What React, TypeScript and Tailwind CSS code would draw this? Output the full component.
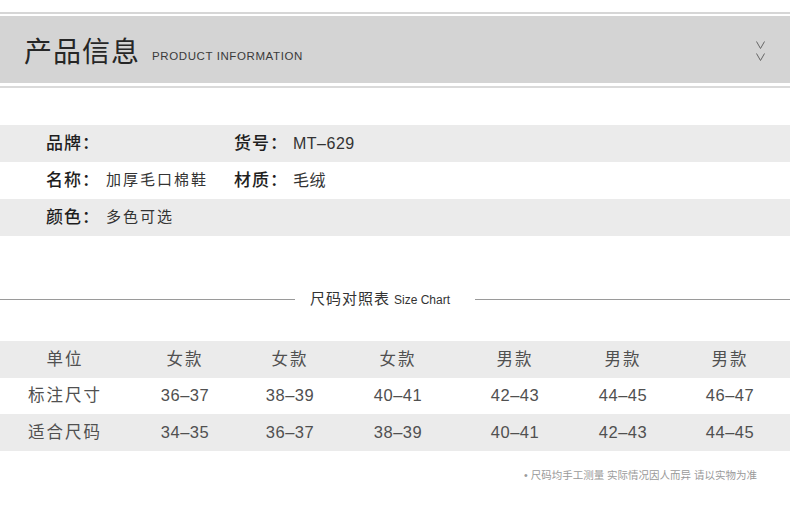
const font = { fontFamily: '"Liberation Sans", "Noto Sans CJK SC", sans-serif' };

const info = [
  { k1: '品牌', v1: '', k2: '货号', v2: 'MT–629', gray: true },
  { k1: '名称', v1: '加厚毛口棉鞋', k2: '材质', v2: '毛绒', gray: false },
  { k1: '颜色', v1: '多色可选', k2: '', v2: '', gray: true },
];

const widths = ['w-[130px]', 'w-[110px]', 'w-[100px]', 'w-[116px]', 'w-[118px]', 'w-[98px]', 'w-[116px]'];

const rows = [
  ['单位', '女款', '女款', '女款', '男款', '男款', '男款'],
  ['标注尺寸', '36–37', '38–39', '40–41', '42–43', '44–45', '46–47'],
  ['适合尺码', '34–35', '36–37', '38–39', '40–41', '42–43', '44–45'],
];

export default function App() {
  return (
    <div className="w-[790px] h-[528px] bg-white overflow-hidden text-[#333]" style={font}>
      {/* 标题栏 */}
      <div className="pt-[12px]">
        <div className="h-[2px] bg-[#d6d6d6]" />
        <div className="mt-[2px] h-[67px] bg-[#d4d4d4] flex items-center pl-[24px] pr-[24px]">
          <span className="mt-[6px] text-[28px] leading-none tracking-[1px] text-[#262626]">产品信息</span>
          <span className="ml-[12px] mt-[14px] text-[11.5px] tracking-[0.6px] text-[#3a3a3a]">PRODUCT INFORMATION</span>
          <div className="ml-auto flex flex-col items-center mr-[1px] mt-[2px]">
            <svg width="9" height="8" viewBox="0 0 9 8" fill="none" stroke="#666" strokeWidth="1">
              <path d="M0.5 0.5 L4.5 7.5 L8.5 0.5" />
            </svg>
            <svg className="mt-[4px]" width="9" height="8" viewBox="0 0 9 8" fill="none" stroke="#666" strokeWidth="1">
              <path d="M0.5 0.5 L4.5 7.5 L8.5 0.5" />
            </svg>
          </div>
        </div>
        <div className="mt-[3px] h-[2px] bg-[#dadada]" />
      </div>

      {/* 产品信息 */}
      <div className="mt-[37px]">
        {info.map((r, i) => (
          <div key={i} className={`h-[37px] flex items-center whitespace-nowrap ${r.gray ? 'bg-[#ebebeb]' : 'bg-white'}`}>
            <div className="w-[234px] pl-[46px] flex items-center">
              <span className="text-[17px] font-medium text-[#1e1e1e] tracking-[1px]">{r.k1}：</span>
              <span className="ml-[6px] text-[15px] tracking-[2px] text-[#333]">{r.v1}</span>
            </div>
            {r.k2 && (
              <div className="flex items-center">
                <span className="text-[17px] font-medium text-[#1e1e1e] tracking-[1px]">{r.k2}：</span>
                <span className="ml-[5px] text-[16px] tracking-[0.5px] text-[#333]">{r.v2}</span>
              </div>
            )}
          </div>
        ))}
      </div>

      {/* 尺码对照表 */}
      <div className="mt-[53px] flex items-center h-[20px]">
        <div className="w-[295px] h-px bg-[#9a9a9a]" />
        <div className="ml-[15px] flex items-baseline">
          <span className="text-[15px] tracking-[1px] text-[#333]">尺码对照表</span>
          <span className="ml-[4px] text-[12px] text-[#333]">Size Chart</span>
        </div>
        <div className="ml-auto w-[315px] h-px bg-[#9a9a9a]" />
      </div>

      <div className="mt-[32px]">
        {rows.map((r, i) => (
          <div key={i} className={`flex h-[36.5px] items-center ${i % 2 === 0 ? 'bg-[#ebebeb]' : 'bg-white'}`}>
            {r.map((c, j) => (
              <div key={j} className={`${widths[j]} text-center text-[16.5px] text-[#505050] ${j === 0 || i === 0 ? 'tracking-[2px]' : 'tracking-[0.5px]'}`}>
                {c}
              </div>
            ))}
          </div>
        ))}
      </div>

      <div className="mt-[17px] pr-[33px] flex justify-end text-[10.5px] text-[#9a9a9a]">
        <span>• 尺码均手工测量 实际情况因人而异 请以实物为准</span>
      </div>
    </div>
  );
}
